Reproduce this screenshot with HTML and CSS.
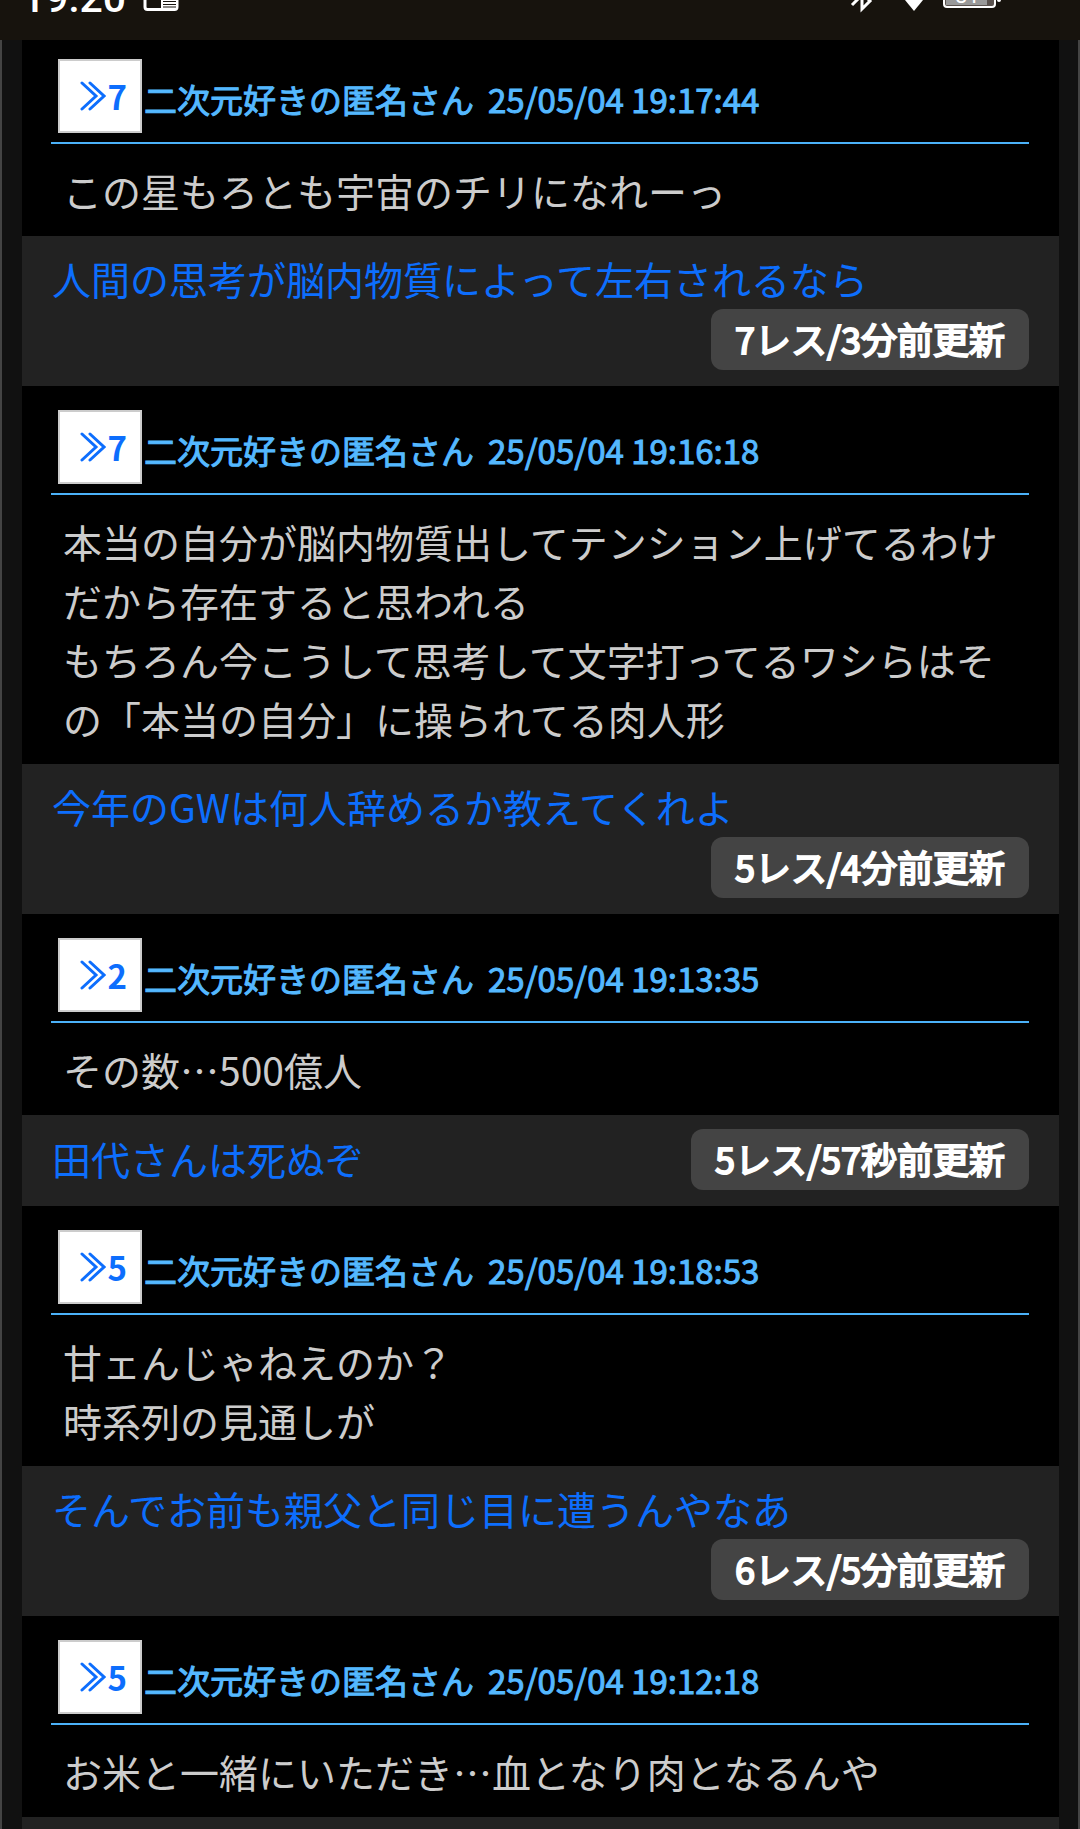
FILE: index.html
```html
<!DOCTYPE html>
<html lang="ja">
<head>
    <meta charset="UTF-8">
    <meta name="viewport" content="width=device-width, initial-scale=1.0">
    <title>二次元好きの匿名さん</title>
    <link rel="stylesheet" href="styles.css">
</head>
<body>
    <div class="status-bar">
        <span class="clock">19:20</span>
        <svg class="status-icon" width="36" height="40" viewBox="0 0 36 40">
            <path d="M2 0v7q0 2.500 2.500 2.500h27q2.500 0 2.500-2.500V0" fill="none" stroke="#fff" stroke-width="3"/>
            <path d="M18 0h15v8H18z" fill="#fff"/>
            <path d="M20 1.500h13M20 4.500h13M20 7h13" stroke="#17130d" stroke-width="1"/>
        </svg>
        <svg class="status-right" width="156" height="40" viewBox="0 0 156 40">
            <path d="M4 5L14-5M14-5v14l8-8-6-6" fill="none" stroke="#fff" stroke-width="3"/>
            <path d="M48-11h36L66 11z" fill="#fff"/>
            <rect x="96" y="-20" width="51" height="27" rx="3" fill="#5a524e" stroke="#fff" stroke-width="2"/>
            <path d="M98-5h41v10H98z" fill="#999"/>
            <text class="battery-level" x="107" y="3">81</text>
            <circle cx="151" cy="0" r="2" fill="#fff"/>
        </svg>
    </div>

    <main class="thread-list">
        <article class="post">
            <header class="post-header">
                <a class="anchor" href="#"><svg class="chevrons" viewBox="0 0 26 30"><path d="M2 2l14 13L2 28M10 2l14 13L10 28"/></svg>7</a>
                <span class="post-name">二次元好きの匿名さん</span>
                <time class="post-date">25/05/04 19:17:44</time>
            </header>
            <p class="post-body">この星もろとも宇宙のチリになれーっ</p>
        </article>
        <div class="thread">
            <a class="thread-title" href="#">人間の思考が脳内物質によって左右されるなら</a>
            <span class="badge">7レス/3分前更新</span>
        </div>

        <article class="post">
            <header class="post-header">
                <a class="anchor" href="#"><svg class="chevrons" viewBox="0 0 26 30"><path d="M2 2l14 13L2 28M10 2l14 13L10 28"/></svg>7</a>
                <span class="post-name">二次元好きの匿名さん</span>
                <time class="post-date">25/05/04 19:16:18</time>
            </header>
            <p class="post-body">本当の自分が脳内物質出してテンション上げてるわけだから存在すると思われる<br>もちろん今こうして思考して文字打ってるワシらはその「本当の自分」に操られてる肉人形</p>
        </article>
        <div class="thread">
            <a class="thread-title" href="#">今年のGWは何人辞めるか教えてくれよ</a>
            <span class="badge">5レス/4分前更新</span>
        </div>

        <article class="post">
            <header class="post-header">
                <a class="anchor" href="#"><svg class="chevrons" viewBox="0 0 26 30"><path d="M2 2l14 13L2 28M10 2l14 13L10 28"/></svg>2</a>
                <span class="post-name">二次元好きの匿名さん</span>
                <time class="post-date">25/05/04 19:13:35</time>
            </header>
            <p class="post-body">その数…500億人</p>
        </article>
        <div class="thread">
            <a class="thread-title" href="#">田代さんは死ぬぞ</a>
            <span class="badge">5レス/57秒前更新</span>
        </div>

        <article class="post">
            <header class="post-header">
                <a class="anchor" href="#"><svg class="chevrons" viewBox="0 0 26 30"><path d="M2 2l14 13L2 28M10 2l14 13L10 28"/></svg>5</a>
                <span class="post-name">二次元好きの匿名さん</span>
                <time class="post-date">25/05/04 19:18:53</time>
            </header>
            <p class="post-body">甘ェんじゃねえのか？<br>時系列の見通しが</p>
        </article>
        <div class="thread">
            <a class="thread-title" href="#">そんでお前も親父と同じ目に遭うんやなあ</a>
            <span class="badge">6レス/5分前更新</span>
        </div>

        <article class="post">
            <header class="post-header">
                <a class="anchor" href="#"><svg class="chevrons" viewBox="0 0 26 30"><path d="M2 2l14 13L2 28M10 2l14 13L10 28"/></svg>5</a>
                <span class="post-name">二次元好きの匿名さん</span>
                <time class="post-date">25/05/04 19:12:18</time>
            </header>
            <p class="post-body">お米と一緒にいただき…血となり肉となるんや</p>
        </article>
        <div class="thread"></div>
    </main>
</body>
</html>
```
FILE: styles.css
```css
* {
    margin: 0;
    padding: 0;
    box-sizing: border-box;
}

body {
    background: #111;
    color: #ccc;
    font-family: "Noto Sans CJK JP", sans-serif;
    font-size: 39px;
    line-height: 59px;
}

a {
    color: #0d6efd;
    text-decoration: none;
}

.status-bar {
    position: fixed;
    top: 0;
    left: 0;
    right: 0;
    z-index: 1;
    display: flex;
    align-items: flex-start;
    height: 40px;
    padding: 0 76px 0 22px;
    overflow: hidden;
    background: #17130d;
}

.clock {
    margin-top: -30px;
    color: #fff;
    font-family: Roboto, sans-serif;
    font-size: 41px;
    font-weight: 500;
    line-height: 56px;
}

.status-icon {
    margin-left: 17px;
}

.status-right {
    margin-left: auto;
}

.battery-level {
    fill: #fff;
    font-family: Roboto, sans-serif;
    font-size: 22px;
}

.thread-list {
    min-height: 100vh;
    padding: 35px 19px 0 20px;
    border: solid #444;
    border-width: 0 2px;
}

.post {
    padding: 24px 30px 0 29px;
    background: #000;
}

.post-header {
    display: flex;
    align-items: flex-end;
    padding: 0 7px 9px;
    border-bottom: 2px solid #4bb1f8;
}

.anchor {
    display: flex;
    align-items: center;
    justify-content: flex-end;
    flex: none;
    width: 84px;
    height: 74px;
    padding-right: 13px;
    border: 2px solid #ccc;
    background: #fff;
    font-size: 33px;
    font-weight: 700;
}

.chevrons {
    width: 26px;
    height: 30px;
    margin-right: 2px;
    fill: none;
    stroke: #0d6efd;
    stroke-width: 3;
    stroke-linecap: round;
}

.post-name,
.post-date {
    color: #54b8ff;
    font-size: 33px;
    line-height: 68px;
    -webkit-text-stroke: 1px #54b8ff;
}

.post-name {
    margin: 0 14px 0 2px;
}

.post-body {
    padding: 17px 13px 16px 12px;
    line-break: anywhere;
}

.thread {
    display: flex;
    flex-wrap: wrap;
    align-items: center;
    justify-content: space-between;
    min-height: 40px;
    padding: 14px 30px 16px;
    background: #222;
}

.thread-title {
    padding-bottom: 2px;
    line-height: 57px;
}

.badge {
    margin-left: auto;
    padding: 0 24px 2px;
    border-radius: 12px;
    background: #444;
    color: #fff;
    font-size: 36px;
    line-height: 59px;
    -webkit-text-stroke: 2px #fff;
}
```
